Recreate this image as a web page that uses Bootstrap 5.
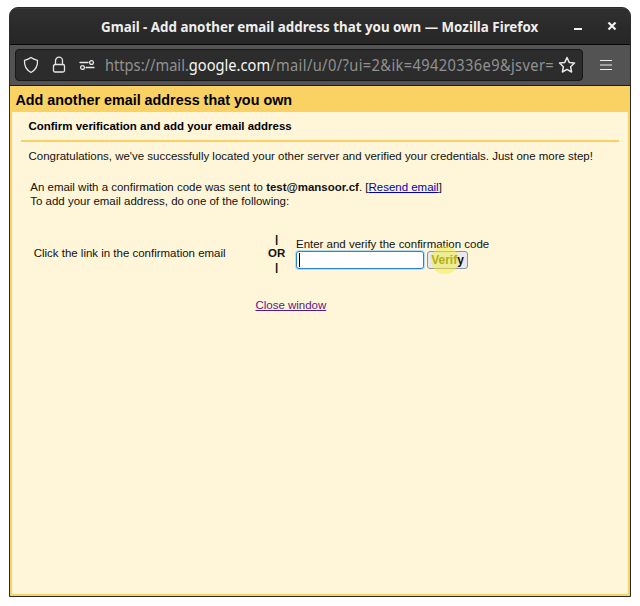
<!DOCTYPE html>
<html lang="en">
<head>
<meta charset="utf-8">
<title>Gmail - Add another email address that you own</title>
<link href="https://cdn.jsdelivr.net/npm/bootstrap@5.3.0/dist/css/bootstrap.min.css" rel="stylesheet">
<style>
body{background:#fff;font:11.47px/14px "Liberation Sans",Arial,sans-serif;color:#111;overflow:hidden}
.window{width:622px;height:590px;margin:7px 0 0 9px;background:#2b2b2b;border:1px solid #2b2b2b;border-radius:9px 9px 0 0;overflow:hidden}
.titlebar{height:37px;flex:none;background:linear-gradient(#303030,#262626);border-bottom:1px solid #080808;font:bold 15px/37px "Noto Sans",sans-serif;color:#eeeeec;padding-left:91px;box-shadow:inset 0 1px #3c3c3c}
.win-title{display:block;width:441px;white-space:nowrap}
.win-title span{display:inline-block;transform-origin:0 50%;transform:scaleX(.89)}
.toolbar{height:41px;flex:none;background:#535353;border-bottom:1px solid #1b1b1b;padding-left:5px}
.address{width:568px;height:32px;background:#2c2c2c;border:1px solid #191919;border-radius:4px;font:16px/30px "Noto Sans",sans-serif;color:#919191;padding-left:7px}
.url{margin-left:10px;width:453px;white-space:nowrap}
.url span{display:inline-block;transform-origin:0 50%;transform:scaleX(.915)}
.url b{font-weight:400;color:#f5f5f5}
.url em{font-style:normal;letter-spacing:.41px}
.ico{fill:none;stroke:#e6e6e6;stroke-width:1.3;stroke-linejoin:round;stroke-linecap:round;flex:none}
.lock{margin-left:13px}.perms{margin-left:13px}
.page{background:#fad163;padding:0 2px 2px}
.page h1{font-size:14.35px;line-height:28px;height:26px;font-weight:700;color:#000;padding-left:3.500px;margin:0}
.panel{background:#fff5d8;padding:0 9px}
.panel h2{font-size:11.47px;line-height:14px;font-weight:700;color:#000;margin:0;padding:7px 0 7px 7.500px;border-bottom:2px solid #fad163;height:30px}
.intro{padding:7px 0 0 7.500px;height:38px;white-space:nowrap}
.message{padding-left:9.300px;height:52px;white-space:nowrap}
.options{height:42px;padding-left:12.700px}
.left-option{width:218px}
.or{width:50px;font-weight:700;text-align:center}
.code-box{margin-left:-5.700px}
.code-input{width:128px;height:18px;background:#fff;border:1px solid #2680e0;border-radius:3px;box-shadow:0 0 0 1px #b6def0;padding:1px 2px;line-height:0}
.caret{display:inline-block;width:1px;height:14px;background:#000}
.verify{position:relative;width:41px;height:18px;margin-left:3px;padding:0;background:#e9e9ed;border:1px solid #8f8f9d;border-radius:3px;color:#111;font:bold 12px/16px "Liberation Sans",Arial,sans-serif;text-align:center}
.halo{position:absolute;left:3px;top:-6px;width:28px;height:28px;border-radius:50%;background:rgba(244,240,60,.5)}
.verify i,.verify u{position:relative;z-index:1;font-style:normal;text-decoration:none}
.verify i{color:#b5b015}
.closer{padding:24px 0 0 234.500px}
a{color:#0000c4}a.seen{color:#551a8b}
</style>
<script src="https://cdn.jsdelivr.net/npm/bootstrap@5.3.0/dist/js/bootstrap.bundle.min.js"></script>
</head>
<body>
<div class="window d-flex flex-column">
  <header class="titlebar d-flex">
    <div class="win-title"><span>Gmail - Add another email address that you own — Mozilla Firefox</span></div>
    <svg class="ms-auto" width="58" height="37" aria-label="Window controls"><path d="M2 21h8" fill="none" stroke="#f2f2f2" stroke-width="2"/><path d="M36.500 14.500l7 7m0-7l-7 7" fill="none" stroke="#f2f2f2" stroke-width="2.200"/></svg>
  </header>
  <div class="toolbar d-flex align-items-center">
    <div class="address d-flex align-items-center">
      <svg class="ico" width="16" height="18" viewBox="0 0 16 18"><path d="M8 1.500Q10.500 3.500 14.500 4.300Q15.200 12.500 8 16.500Q.8 12.500 1.500 4.300Q5.500 3.500 8 1.500Z"/></svg>
      <svg class="ico lock" width="14" height="18" viewBox="0 0 14 18"><rect x="1.500" y="8.500" width="11" height="7.500" rx="1.500"/><path d="M3.500 8.500V4.700a3.500 3.500 0 0 1 7 0v3.800"/></svg>
      <svg class="ico perms" width="16" height="18" viewBox="0 0 16 18"><path d="M1 6.500h8M7 11.500h8"/><circle cx="12.500" cy="6.500" r="1.900"/><circle cx="3.500" cy="11.500" r="1.900"/></svg>
      <div class="url"><span>https://mail.<b>google.com</b><em>/mail/u/0/?ui=2&amp;ik=49420336e9&amp;jsver=</em></span></div>
      <svg class="ico" width="18" height="18" viewBox="0 0 18 18"><path stroke-width="1.500" d="M9 1.500l2.200 4.900 5.300.6-3.900 3.700 1 5.300L9 13.400 4.400 16l1-5.300L1.500 7l5.300-.6z"/></svg>
    </div>
    <svg class="ms-3" width="14" height="14" aria-label="Menu"><path d="M1 2.500h12M1 7h12M1 11.500h12" fill="none" stroke="#eee" stroke-width="1.200"/></svg>
  </div>
  <main class="page d-flex flex-column flex-grow-1">
    <h1>Add another email address that you own</h1>
    <section class="panel flex-grow-1">
      <h2>Confirm verification and add your email address</h2>
      <div class="intro">Congratulations, we've successfully located your other server and verified your credentials. Just one more step!</div>
      <div class="message">An email with a confirmation code was sent to <b>test@mansoor.cf</b>. [<a href="#">Resend email</a>]<br>To add your email address, do one of the following:</div>
      <div class="options d-flex align-items-center">
        <div class="left-option">Click the link in the confirmation email</div>
        <div class="or">|<br>OR<br>|</div>
        <div class="code-box">
          <label class="d-block ps-0">Enter and verify the confirmation code</label>
          <div class="d-flex"><div class="code-input" role="textbox"><span class="caret"></span></div><button class="verify"><i>Verif</i><u>y</u><span class="halo"></span></button></div>
        </div>
      </div>
      <div class="closer"><a class="seen" href="#">Close window</a></div>
    </section>
  </main>
</div>
</body>
</html>
